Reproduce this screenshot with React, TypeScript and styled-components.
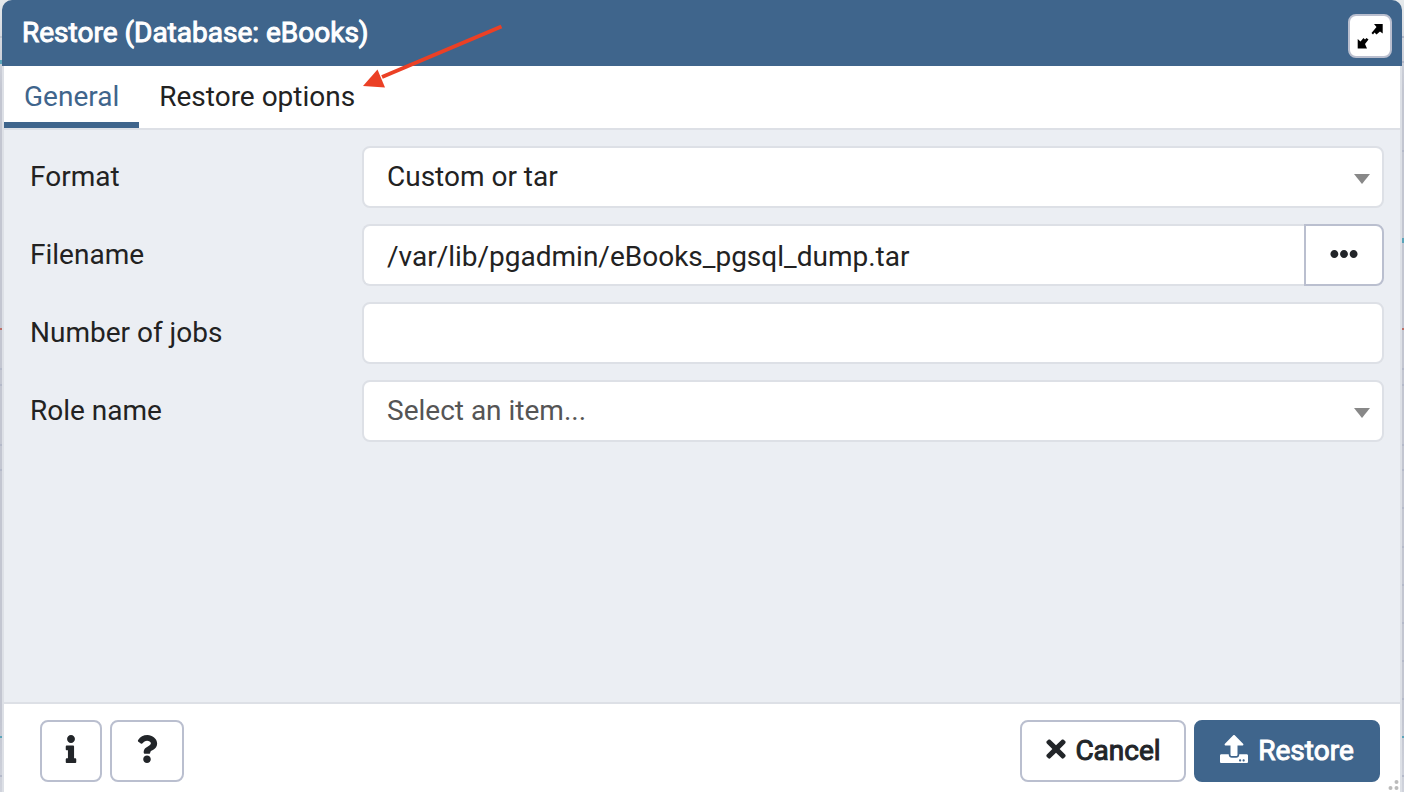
import React from 'react';
import styled, { createGlobalStyle, css } from 'styled-components';
import { FaInfo, FaQuestion, FaTimes, FaUpload, FaEllipsisH } from 'react-icons/fa';

const GlobalStyle = createGlobalStyle`
  *, *::before, *::after { box-sizing: border-box; }
  body { margin: 0; overflow: hidden; }
`;

const TEAL = '#5ba5ba';
const RED = '#bc6f68';
const GREY = '#b4b9c9';

const mark = (color: string, x: number, y: number, height = 2) =>
  `linear-gradient(${color}, ${color}) ${x}px ${y}px / 2px ${height}px no-repeat`;

/* Lines of the page behind the dialog, visible at its left and right edges. */
const edgeMarks = [
  mark('#c3c7cf', 0, 36),
  mark(TEAL, 0, 60, 4),
  mark(RED, 0, 328),
  ...[368, 384, 444, 469, 775].map((y) => mark(GREY, 0, y)),
  mark(TEAL, 0, 736),
  ...[36, 61, 150, 368, 384, 444, 469, 507, 546, 584, 622, 660, 698, 775].map((y) => mark(GREY, 1402, y)),
  mark(TEAL, 1402, 238, 5),
  mark(RED, 1402, 328),
  mark(TEAL, 1402, 736),
].join(', ');

const Backdrop = styled.div`
  height: 792px;
  width: 1404px;
  padding: 0 2px;
  font-family: Roboto, sans-serif;
  font-size: 28px;
  line-height: 42px;
  color: #222;
  background: ${edgeMarks}, linear-gradient(#e6eaec 0, #d5d8df 40px, #c3c6d1 90px, #c3c6d1 720px, #d0d3dc 792px);
`;

const Dialog = styled.section`
  display: flex;
  flex-direction: column;
  height: 100%;
`;

const TitleBar = styled.header`
  display: flex;
  justify-content: space-between;
  height: 66px;
  padding: 12px 10px 0 20px;
  border-radius: 10px 10px 0 0;
  background: #3f658c;
  color: #fff;
`;

const Title = styled.h1`
  margin: 0;
  font-size: 28px;
  font-weight: 400;
  line-height: 42px;
  -webkit-text-stroke: 1px currentColor;
`;

const MaximizeButton = styled.button`
  display: grid;
  place-items: center;
  width: 44px;
  height: 44px;
  margin-top: 2px;
  padding: 0;
  border: 2px solid #babfcf;
  border-radius: 8px;
  background: #fff;
`;

const Frame = styled.div`
  display: flex;
  flex: 1;
  flex-direction: column;
  border: solid #dde0e6;
  border-width: 0 2px;
`;

const TabBar = styled.nav`
  display: flex;
  height: 64px;
  border-bottom: 2px solid #dde0e6;
  background: #fff;
`;

const Tab = styled.button<{ $active?: boolean }>`
  padding: 6px 20px 0;
  border: 0;
  border-bottom: 6px solid ${(p) => (p.$active ? '#3f658c' : 'transparent')};
  background: none;
  color: ${(p) => (p.$active ? '#3f658c' : '#222')};
  font: inherit;
  white-space: nowrap;
`;

const Form = styled.main`
  display: flex;
  flex: 1;
  flex-direction: column;
  gap: 16px;
  padding: 16px 16px 0 26px;
  background: #ebeef3;
`;

const Field = styled.div`
  display: grid;
  grid-template-columns: 332px 1fr;
  height: 62px;
`;

const Label = styled.label`
  padding-top: 10px;
`;

const Control = styled.div<{ $joined?: boolean; $muted?: boolean }>`
  display: flex;
  flex: 1;
  align-items: flex-start;
  justify-content: space-between;
  height: 62px;
  padding: ${(p) => (p.$joined ? '10px 12px 0 23px' : '8px 12px 0 23px')};
  border: 2px solid #dde0e6;
  border-radius: ${(p) => (p.$joined ? '8px 0 0 8px' : '8px')};
  border-right-width: ${(p) => (p.$joined ? 0 : '2px')};
  background: #fff;
  color: ${(p) => (p.$muted ? '#555' : '#222')};
`;

const ControlGroup = styled.div`
  display: flex;
`;

const BrowseButton = styled.button`
  display: grid;
  place-items: center;
  width: 80px;
  height: 62px;
  padding: 0 0 3px;
  border: 2px solid #babfcf;
  border-radius: 0 8px 8px 0;
  background: #fff;
  color: #222529;
`;

const Caret = styled.span`
  margin-top: 18px;
  border: solid transparent;
  border-width: 10px 8px 0;
  border-top-color: #888;
`;

const Footer = styled.footer`
  display: flex;
  justify-content: space-between;
  height: 90px;
  padding: 16px 20px 0 36px;
  border-top: 2px solid #dde0e6;
  background: #fff;
`;

const ButtonGroup = styled.div`
  display: flex;
  gap: 8px;
`;

const Button = styled.button<{ $width: number; $primary?: boolean }>`
  display: flex;
  align-items: center;
  justify-content: center;
  gap: ${(p) => (p.$primary ? 10 : 5)}px;
  width: ${(p) => p.$width}px;
  height: 62px;
  padding: 0 ${(p) => (p.$width === 166 ? 3 : 0)}px 1px 0;
  border: 2px solid #babfcf;
  border-radius: 8px;
  background: #fff;
  color: #222529;
  font: inherit;
  -webkit-text-stroke: 1px currentColor;
  ${(p) =>
    p.$primary &&
    css`
      border-color: #3f658c;
      background: #3f658c;
      color: #fff;
    `}

  svg {
    margin-bottom: 3px;
  }
`;

const ResizeGrip = styled.svg`
  position: absolute;
  left: 1384px;
  top: 776px;
`;

const Pointer = styled.svg`
  position: absolute;
  left: 360px;
  top: 20px;
`;

export default function App() {
  return (
    <Backdrop>
      <GlobalStyle />
      <Dialog>
        <TitleBar>
          <Title>Restore (Database: eBooks)</Title>
          <MaximizeButton aria-label="Maximize">
            <svg width="26" height="26" viewBox="0 0 26 26">
              <path
                d="M17 1H25.700V10.500L23 8.500 19.500 11.500 17.500 9.500 16 11.500 14.500 10 19.500 4zM9.500 15 11.500 16.500 8 21 10 25.500H.700V16L3.500 18.500 6.500 15 8 16.500z"
                fill="#000"
              />
            </svg>
          </MaximizeButton>
        </TitleBar>
        <Frame>
          <TabBar>
            <Tab $active>General</Tab>
            <Tab>Restore options</Tab>
          </TabBar>
          <Form>
            <Field>
              <Label>Format</Label>
              <Control>Custom or tar<Caret /></Control>
            </Field>
            <Field>
              <Label>Filename</Label>
              <ControlGroup>
                <Control $joined>/var/lib/pgadmin/eBooks_pgsql_dump.tar</Control>
                <BrowseButton aria-label="Browse"><FaEllipsisH size={28} /></BrowseButton>
              </ControlGroup>
            </Field>
            <Field>
              <Label>Number of jobs</Label>
              <Control />
            </Field>
            <Field>
              <Label>Role name</Label>
              <Control $muted>Select an item...<Caret /></Control>
            </Field>
          </Form>
          <Footer>
            <ButtonGroup>
              <Button $width={62} aria-label="Info"><FaInfo size={28} /></Button>
              <Button $width={74} aria-label="Help"><FaQuestion size={28} /></Button>
            </ButtonGroup>
            <ButtonGroup>
              <Button $width={166}><FaTimes size={28} />Cancel</Button>
              <Button $width={186} $primary><FaUpload size={28} />Restore</Button>
            </ButtonGroup>
          </Footer>
        </Frame>
      </Dialog>
      <ResizeGrip width="16" height="16" fill="#bbb">
        <circle cx="12.500" cy="6" r="2" />
        <circle cx="6.500" cy="12" r="2" />
        <circle cx="12.500" cy="12" r="2" />
      </ResizeGrip>
      <Pointer width="150" height="74">
        <path d="M141.500 6.500 22 57" stroke="#eb4025" strokeWidth="4" />
        <path d="M3 66 17.500 49.500 25 67.500z" fill="#eb4025" />
      </Pointer>
    </Backdrop>
  );
}
